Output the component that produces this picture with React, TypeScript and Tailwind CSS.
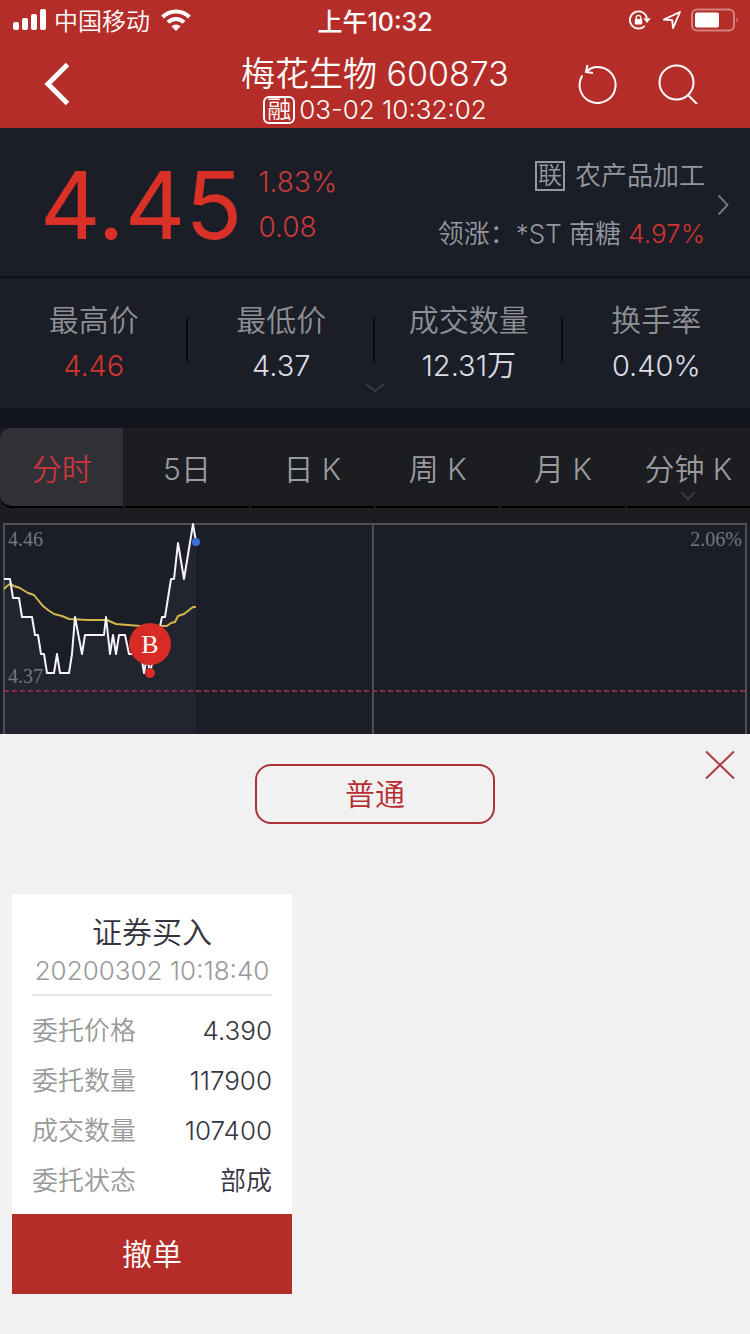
import React, { useState } from 'react';

const STATS = [
  { label: '最高价', value: '4.46', up: true },
  { label: '最低价', value: '4.37' },
  { label: '成交数量', value: '12.31万' },
  { label: '换手率', value: '0.40%' },
];

const TABS = ['分时', '5日', '日 K', '周 K', '月 K', '分钟 K'];

const ORDER_ROWS = [
  { label: '委托价格', value: '4.390' },
  { label: '委托数量', value: '117900' },
  { label: '成交数量', value: '107400' },
  { label: '委托状态', value: '部成' },
];

const PRICE_LINE =
  '4,73 10,73 13,92 19,92 22,111 32,111 35,129 38,129 41,148 44,148 47,167 54,167 57,148 60,167 69,167 72,148 75,111 82,148 85,129 104,129 106,111 110,148 113,129 116,148 119,129 125,129 129,148 141,148 144,167 147,150 150,167 162,111 165,111 171,73 174,73 178,37 184,73 193,18 196,36';

const AVERAGE_LINE =
  '4,83 7,80 10,78 14,80 20,82 28,87 34,89 38,94 43,100 48,104 54,108 62,110 69,113 88,114 107,114 116,118 128,119 140,120 167,120 171,117 175,116 178,110 184,108 193,101 196,101';

function StatusBar() {
  return (
    <div className="grid h-10 grid-cols-[1fr_auto_1fr] items-center px-3 text-2xl leading-none">
      <div className="flex items-center gap-1.5">
        <svg className="h-6 w-9" viewBox="0 0 36 24" fill="#fff">
          <rect x="1" y="14" width="6" height="8" rx="2" />
          <rect x="10" y="10" width="6" height="12" rx="2" />
          <rect x="19" y="6" width="6" height="16" rx="2" />
          <rect x="28" y="1" width="6" height="21" rx="2" />
        </svg>
        <span className="pt-1">中国移动</span>
        <svg className="ml-1 h-6 w-8" viewBox="0 0 32 24" fill="none" stroke="#fff" strokeWidth="4">
          <path d="M2.6 9a19 19 0 0 1 26.8 0" />
          <path d="M8 14.4a11.4 11.4 0 0 1 16 0" />
          <path d="M16 23l-4.6-4.7a6.6 6.6 0 0 1 9.2 0z" fill="#fff" stroke="none" />
        </svg>
      </div>
      <span className="pt-1 text-[25px] leading-none font-medium">上午10:32</span>
      <div className="flex items-center justify-end">
        <svg className="mr-2.5 h-5 w-6" viewBox="0 0 24 20" fill="none" stroke="#fff" strokeWidth="1.8">
          <path d="M18.900 8A8.600 8.600 0 1 0 16.800 15.800" />
          <path d="M15.4 8.300h7.400l-3.800 4.600z" fill="#fff" stroke="none" />
          <rect x="6.800" y="9" width="7.400" height="5.600" rx="0.800" fill="#fff" stroke="none" />
          <path d="M8.300 9.400V7.600a2.200 2.200 0 0 1 4.400 0v1.800" strokeWidth="1.4" />
        </svg>
        <svg className="mr-2 h-5 w-5" viewBox="0 0 20 20" fill="none" stroke="#fff" strokeWidth="1.8" strokeLinejoin="round">
          <path d="M18 2L1.800 9.600l8.400.6.800 8z" />
        </svg>
        <svg className="h-6 w-12" viewBox="0 0 48 24">
          <rect x="2" y="1.500" width="42" height="21" rx="5" fill="none" stroke="#fff" strokeOpacity="0.4" strokeWidth="2" />
          <rect x="5" y="4.500" width="24" height="15" rx="2" fill="#fff" />
          <path d="M46.500 9q2 3 0 6z" fill="#fff" fillOpacity="0.5" />
        </svg>
      </div>
    </div>
  );
}

function NavBar() {
  return (
    <div className="grid h-[88px] grid-cols-[1fr_auto_1fr] items-center">
      <button type="button" aria-label="返回" className="ml-11 h-12 w-7">
        <svg className="h-11 w-7" viewBox="0 0 28 44" fill="none" stroke="#fff" strokeWidth="5">
          <path d="M23.500 2.500L4 22l19.500 19.500" />
        </svg>
      </button>
      <div className="flex flex-col items-center self-end">
        <h1 className="text-[34px] leading-9">梅花生物 600873</h1>
        <p className="flex items-center gap-1 text-[26px] leading-9">
          <span className="flex h-7 w-8 items-center justify-center rounded-md border-2 border-white text-2xl leading-none">融</span>
          03-02 10:32:02
        </p>
      </div>
      <div className="flex items-center justify-end gap-10 pr-[52px]">
        <button type="button" aria-label="刷新" className="h-10 w-10">
          <svg className="h-10 w-10" viewBox="0 0 40 40" fill="none" stroke="#fff" strokeWidth="2">
            <path d="M4.300 11.500A18 18 0 1 0 19.500 3C15.500 3 11.500 4.500 8 8" />
            <path d="M9.500 1L8 8l7 1" />
          </svg>
        </button>
        <button type="button" aria-label="搜索" className="h-10 w-10">
          <svg className="h-10 w-10" viewBox="0 0 40 40" fill="none" stroke="#fff" strokeWidth="2">
            <circle cx="18.500" cy="18.500" r="17" />
            <path d="M30 31l9 9" />
          </svg>
        </button>
      </div>
    </div>
  );
}

function PricePanel() {
  return (
    <section className="flex h-[150px] items-center border-b-2 border-[#10121a] pt-1.5 pr-[21px] pl-10 text-[#9598a0]">
      <strong className="text-[94px] leading-none font-normal text-[#d93127]">4.45</strong>
      <div className="ml-4 text-[28px] leading-[45px] text-[#c93a3a]">
        <div>1.83%</div>
        <div>0.08</div>
      </div>
      <a href="#sector" className="ml-auto flex items-center gap-3">
        <span className="flex flex-col items-end text-[26px] leading-[58px]">
          <span className="flex items-center gap-2.5">
            <span className="flex h-[30px] w-[30px] items-center justify-center border-2 border-[#9598a0] text-2xl leading-none">联</span>
            农产品加工
          </span>
          <span>
            领涨：*ST 南糖 <span className="text-[#cf3430]">4.97%</span>
          </span>
        </span>
        <svg className="h-6 w-3" viewBox="0 0 12 24" fill="none" stroke="#74777f" strokeWidth="2">
          <path d="M1.500 2.500l9 9.500-9 9.500" />
        </svg>
      </a>
    </section>
  );
}

function StatsPanel() {
  return (
    <section className="relative h-[130px] pt-5">
      <dl className="grid grid-cols-4 text-center leading-[45px]">
        {STATS.map((s, i) => (
          <div key={s.label} className="relative">
            <dt className="text-[30px] text-[#8d9097]">{s.label}</dt>
            <dd className={s.up ? 'text-[29px] text-[#d3342f]' : 'text-[29px] text-[#dcdde6]'}>{s.value}</dd>
            {i < STATS.length - 1 && <span className="absolute top-5 right-0 h-11 w-0.5 bg-[#07090f]" />}
          </div>
        ))}
      </dl>
      <svg className="absolute bottom-3.5 left-1/2 h-3 w-6 -translate-x-1/2" viewBox="0 0 24 12" fill="none" stroke="#3a3d44" strokeWidth="2">
        <path d="M3 2l9 7 9-7" />
      </svg>
    </section>
  );
}

function PeriodTabs() {
  const [active, setActive] = useState(0);

  return (
    <div role="tablist" className="grid h-20 grid-cols-6 gap-x-0.5 bg-[#1c1d20]">
      {TABS.map((tab, i) => (
        <button
          key={tab}
          type="button"
          role="tab"
          aria-selected={i === active}
          onClick={() => setActive(i)}
          className={
            i === active
              ? 'relative rounded-l-xl border-b-2 border-black bg-[#303136] pt-1 text-3xl text-[#c7353a]'
              : 'relative border-b-2 border-black pt-1 text-3xl text-[#9a9b9f]'
          }
        >
          {tab}
          {i === TABS.length - 1 && (
            <svg className="absolute bottom-1 left-1/2 h-3 w-5 -translate-x-1/2" viewBox="0 0 20 12" fill="none" stroke="#3a3c40" strokeWidth="2">
              <path d="M3 2l7 7 7-7" />
            </svg>
          )}
        </button>
      ))}
    </div>
  );
}

function MinuteChart() {
  return (
    <svg className="block w-full" viewBox="0 2 750 226" role="img" aria-label="分时走势">
      <rect y="2" width="750" height="16" fill="#1c1d20" />
      <rect x="4" y="18" width="742" height="212" fill="#1b1e26" />
      <polygon points={`4,230 ${PRICE_LINE} 196,230`} fill="#222530" />

      {/* frame and midday divider */}
      <path d="M4 230V18H746V230M373 18V230" fill="none" stroke="#4c4f55" strokeWidth="2" />
      <path d="M4 185H746" stroke="#8a2d45" strokeWidth="2" strokeDasharray="5 3" />

      <g fill="#74777d" fontSize="20" fontFamily="Liberation Serif, serif">
        <text x="8" y="40">4.46</text>
        <text x="8" y="177">4.37</text>
        <text x="742" y="40" textAnchor="end">2.06%</text>
      </g>

      <polyline points={AVERAGE_LINE} fill="none" stroke="#d2b84c" strokeWidth="2" strokeLinejoin="round" />
      <polyline points={PRICE_LINE} fill="none" stroke="#f4f4fa" strokeWidth="2" strokeLinejoin="round" />
      <circle cx="196" cy="36" r="4" fill="#3f6ee0" />

      {/* buy marker */}
      <circle cx="150" cy="167" r="5" fill="#d92b26" />
      <circle cx="150" cy="138" r="21" fill="#d92b26" />
      <text x="150" y="147" fill="#fff" fontSize="26" fontFamily="Liberation Serif, serif" textAnchor="middle">B</text>
    </svg>
  );
}

function OrderCard() {
  return (
    <article className="mt-[70px] ml-3 w-[280px] bg-white text-[#34343f]">
      <div className="px-5 pt-[18px] pb-2">
        <h2 className="text-center text-3xl leading-10">证券买入</h2>
        <p className="border-b-2 border-[#e6e6e6] pb-1 text-center text-[26px] leading-[38px] whitespace-nowrap text-[#999]">
          20200302 10:18:40
        </p>
        <dl className="mt-2.5">
          {ORDER_ROWS.map((row) => (
            <div key={row.label} className="flex justify-between text-[26px] leading-[50px]">
              <dt className="text-[#999]">{row.label}</dt>
              <dd>{row.value}</dd>
            </div>
          ))}
        </dl>
      </div>
      <button type="button" className="h-20 w-full bg-[#b52d28] text-3xl text-white">
        撤单
      </button>
    </article>
  );
}

export default function App() {
  return (
    <div className="flex min-h-screen flex-col bg-[#1b1e26] font-['Inter','Noto_Sans_CJK_SC',sans-serif] font-[350]">
      <header className="bg-[#b52d28] text-white">
        <StatusBar />
        <NavBar />
      </header>
      <PricePanel />
      <StatsPanel />
      <div className="h-5 bg-[#12151e]" />
      <PeriodTabs />
      <MinuteChart />

      <section className="flex-1 bg-[#f1f1f1] pb-10">
        <div className="grid grid-cols-[1fr_auto_1fr] pt-4">
          <button type="button" className="col-start-2 mt-3.5 h-[60px] w-60 rounded-2xl border-2 border-[#a8343a] text-3xl text-[#b52d32]">
            普通
          </button>
          <button type="button" aria-label="关闭" className="mr-[15px] h-[30px] w-[30px] justify-self-end">
            <svg className="h-[30px] w-[30px]" viewBox="0 0 30 30" fill="none" stroke="#b03a40" strokeWidth="2">
              <path d="M1 1.500l28 27M29 1.500L1 28.500" />
            </svg>
          </button>
        </div>
        <OrderCard />
      </section>
    </div>
  );
}
